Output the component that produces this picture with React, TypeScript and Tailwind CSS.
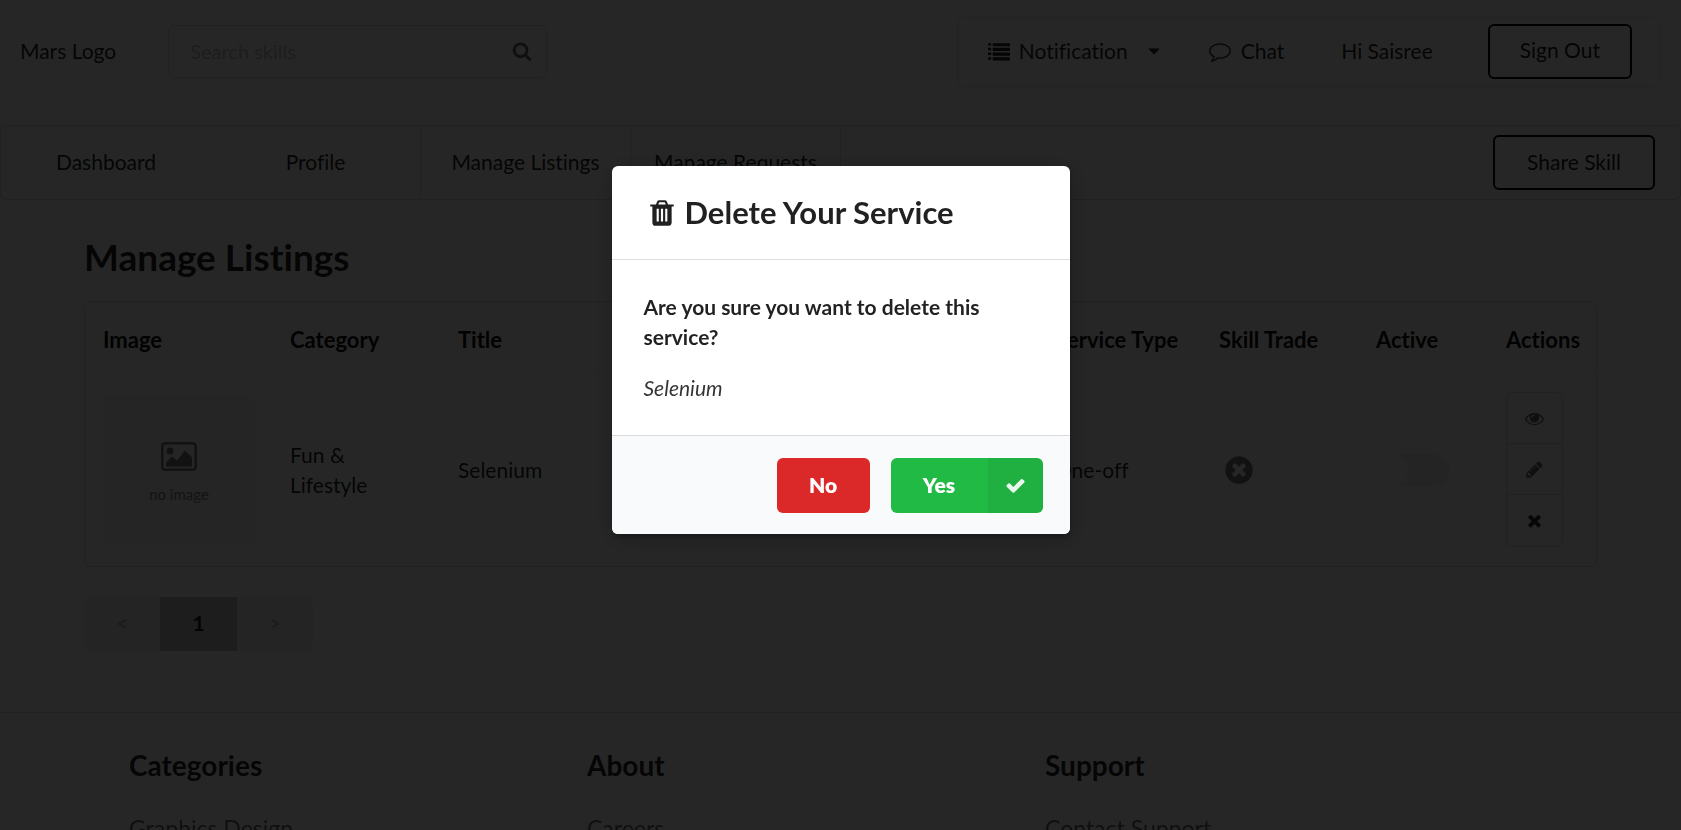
import React from "react";

const ICONS = {
  search:
    "M1216 832q0-185-131.5-316.5t-316.5-131.5-316.5 131.5-131.5 316.5 131.5 316.5 316.5 131.5 316.5-131.5 131.5-316.5zm512 832q0 52-38 90t-90 38q-54 0-90-38l-343-342q-179 124-399 124-143 0-273.5-55.5t-225-150-150-225-55.5-273.5 55.5-273.5 150-225 225-150 273.5-55.5 273.5 55.5 225 150 150 225 55.5 273.5q0 220-124 399l343 343q37 37 37 90z",
  comment:
    "M896 384q-204 0-381.5 69.5t-282 187.5-104.5 255q0 112 71.5 213.5t201.5 175.5l87 50-27 96q-24 91-70 172 152-63 275-171l43-38 57 6q69 8 130 8 204 0 381.5-69.5t282-187.5 104.5-255-104.5-255-282-187.5-381.5-69.5zm896 512q0 174-120 321.5t-326 233-450 85.5q-70 0-145-8-198 175-460 242-49 14-114 22h-5q-15 0-27-10.5t-16-27.5v-1q-3-4-.5-12t2-10 4.5-9.5l6-9 7-8.5 8-9q7-8 31-34.5t34.5-38 31-39.5 32.5-51 27-59 26-76q-157-89-247.5-220t-90.5-281q0-174 120-321.5t326-233 450-85.5 450 85.5 326 233 120 321.5z",
  list: "M0 256h256v192H0zM384 256h1408v256H384zM0 640h256v192H0zM384 640h1408v256H384zM0 1024h256v192H0zM384 1024h1408v256H384zM0 1408h256v192H0zM384 1408h1408v256H384z",
  caret: "M1408 704q0 26-19 45l-448 448q-19 19-45 19t-45-19l-448-448q-19-19-19-45t19-45 45-19h896q26 0 45 19t19 45z",
  times:
    "M1490 1322q0 40-28 68l-136 136q-28 28-68 28t-68-28l-294-294-294 294q-28 28-68 28t-68-28l-136-136q-28-28-28-68t28-68l294-294-294-294q-28-28-28-68t28-68l136-136q28-28 68-28t68 28l294 294 294-294q28-28 68-28t68 28l136 136q28 28 28 68t-28 68l-294 294 294 294q28 28 28 68z",
  timesCircle:
    "M1277 1122q0-26-19-45l-181-181 181-181q19-19 19-45 0-27-19-46l-90-90q-19-19-46-19-26 0-45 19l-181 181-181-181q-19-19-45-19-27 0-46 19l-90 90q-19 19-19 46 0 26 19 45l181 181-181 181q-19 19-19 45 0 27 19 46l90 90q19 19 46 19 26 0 45-19l181-181 181 181q19 19 45 19 27 0 46-19l90-90q19-19 19-46zm387-226q0 209-103 385.5t-279.5 279.5-385.5 103-385.5-103-279.5-279.5-103-385.5 103-385.5 279.5-279.5 385.5-103 385.5 103 279.5 279.5 103 385.5z",
  check:
    "M1671 566q0 40-28 68l-724 724-136 136q-28 28-68 28t-68-28l-136-136-362-362q-28-28-28-68t28-68l136-136q28-28 68-28t68 28l294 295 656-657q28-28 68-28t68 28l136 136q28 28 28 68z",
  pencil:
    "M491 1536l91-91-235-235-91 91v107h128v128h107zm523-928q0-22-22-22-10 0-17 7l-542 542q-7 7-7 17 0 22 22 22 10 0 17-7l542-542q7-7 7-17zm-54-192l416 416-832 832h-416v-416zm683 96q0 53-37 90l-166 166-416-416 166-165q36-38 90-38 53 0 91 38l235 234q37 39 37 91z",
  eye: "M1664 960q-152-236-381-353 61 104 61 225 0 185-131.5 316.5t-316.5 131.5-316.5-131.5-131.5-316.5q0-121 61-225-229 117-381 353 133 205 333.5 326.5t434.5 121.5 434.5-121.5 333.5-326.5zm-720-384q0-20-14-34t-34-14q-125 0-214.5 89.5t-89.5 214.5q0 20 14 34t34 14 34-14 14-34q0-86 61-147t147-61q20 0 34-14t14-34zm848 384q0 34-20 69-140 230-376.5 368.5t-499.5 138.5-499.5-139-376.5-368q-20-35-20-69t20-69q140-229 376.5-368t499.5-139 499.5 139 376.5 368q20 35 20 69z",
  trash:
    "M704 1376v-704q0-14-9-23t-23-9h-64q-14 0-23 9t-9 23v704q0 14 9 23t23 9h64q14 0 23-9t9-23zm256 0v-704q0-14-9-23t-23-9h-64q-14 0-23 9t-9 23v704q0 14 9 23t23 9h64q14 0 23-9t9-23zm256 0v-704q0-14-9-23t-23-9h-64q-14 0-23 9t-9 23v704q0 14 9 23t23 9h64q14 0 23-9t9-23zm-544-992h448l-48-117q-7-9-17-11h-317q-10 2-17 11zm928 32v64q0 14-9 23t-23 9h-96v948q0 83-47 143.5t-113 60.5h-832q-66 0-113-58.5t-47-141.5v-952h-96q-14 0-23-9t-9-23v-64q0-14 9-23t23-9h309l70-167q15-37 54-63t79-26h320q40 0 79 26t54 63l70 167h309q14 0 23 9t9 23z",
};

function Icon({ name, className }: { name: keyof typeof ICONS; className: string }) {
  return (
    <svg viewBox="0 0 1792 1792" fill="currentColor" aria-hidden="true" className={className}>
      <path d={ICONS[name]} />
    </svg>
  );
}

const outlineButton = "h-[55px] rounded-md border-2 border-black pb-[2px] text-black/90";

function Header() {
  return (
    <header className="flex items-center justify-between pt-[17px] pr-5 pl-5">
      <div className="flex items-center gap-[52px] pb-[2px]">
        <a href="#home">Mars Logo</a>
        <div className="relative">
          <input
            type="text"
            aria-label="Search skills"
            placeholder="Search skills"
            className="block h-[53px] w-[379px] rounded-md border border-black/15 pr-14 pb-[2px] pl-[21px] outline-none placeholder:text-[20px] placeholder:text-[#bfbfbf]"
          />
          <button aria-label="Search" className="absolute inset-y-0 right-[15px] text-black/60">
            <Icon name="search" className="size-[20px]" />
          </button>
        </div>
      </div>
      <div className="flex h-[70px] items-center rounded-md border border-black/10 pr-[28px] pb-[2px] pl-[30px]">
        <button className="flex items-center gap-[9px]">
          <Icon name="list" className="size-[22px]" />
          Notification
          <Icon name="caret" className="ml-2 size-[18px]" />
        </button>
        <a href="#chat" className="ml-[46px] flex items-center gap-[10px]">
          <Icon name="comment" className="size-[22px] text-black/75" />
          Chat
        </a>
        <span className="mr-[55px] ml-[57px]">Hi Saisree</span>
        <button className={outlineButton + " px-[30px]"}>Sign Out</button>
      </div>
    </header>
  );
}

function Nav() {
  const items = ["Dashboard", "Profile", "Manage Listings", "Manage Requests"];
  return (
    <nav className="mt-[38px] flex h-[75px] items-center rounded-md border border-black/15 pr-[25px]">
      {items.map((item, i) => (
        <a
          key={item}
          href="#listings"
          className={
            "flex h-full w-[210px] items-center justify-center pb-[2px] " + (i > 0 ? "border-r border-black/15" : "")
          }
        >
          {item}
        </a>
      ))}
      <button className={outlineButton + " ml-auto px-8"}>Share Skill</button>
    </nav>
  );
}

function Listings() {
  const heads: [string, string][] = [
    ["Image", "w-[187px]"],
    ["Category", "w-[168px]"],
    ["Title", "w-[167px]"],
    ["Description", "w-[430px]"],
    ["Service Type", "w-[164px]"],
    ["Skill Trade", "w-[157px]"],
    ["Active", "w-[130px]"],
    ["Actions", ""],
  ];
  const actionButton = "flex h-[51px] items-center justify-center";
  return (
    <main className="px-[84px] pt-[32px]">
      <h1 className="text-[37px] leading-[50px] font-bold">Manage Listings</h1>
      <div className="mt-[19px] rounded-md border border-black/15">
        <table className="w-full table-fixed text-left">
          <thead>
            <tr className="h-[71px] border-b border-black/5 bg-[#fafafa]">
              {heads.map(([label, width]) => (
                <th key={label} className={"pt-[5px] pl-[18px] text-[22px] font-bold whitespace-nowrap text-black/95 " + width}>
                  {label}
                </th>
              ))}
            </tr>
          </thead>
          <tbody>
            <tr className="h-[193px]">
              <td className="pl-[18px]">
                <div className="flex h-[150px] w-[152px] flex-col items-center justify-center rounded-md bg-[#f4f4f4] pt-[6px] text-[#777]">
                  <svg viewBox="0 0 36 29" className="h-[29px] w-[36px]" fill="currentColor" aria-hidden="true">
                    <rect x="1.25" y="1.25" width="33.5" height="26.5" rx="3" fill="none" stroke="currentColor" strokeWidth="2.5" />
                    <circle cx="9" cy="9" r="3.5" />
                    <path d="M5 24.500v-4l6-6 5 4 8-10 7 7v9z" />
                  </svg>
                  <span className="mt-[13px] text-[15px] leading-5 text-[#888]">no image</span>
                </div>
              </td>
              <td className="pr-8 pl-[18px]">Fun &amp; Lifestyle</td>
              <td className="pl-[18px]">Selenium</td>
              <td className="pl-[18px]">Selenium</td>
              <td className="pl-[18px]">One-off</td>
              <td className="pl-[18px]">
                <Icon name="timesCircle" className="ml-1 size-[32px] text-[#777]" />
              </td>
              <td className="pl-[18px]">
                <label className="relative block h-8 w-[74px]">
                  <input type="checkbox" defaultChecked aria-label="Active" className="peer sr-only" />
                  <span className="block h-8 rounded-full bg-[#f1f1f1]" />
                  <span className="absolute top-0 left-0 size-8 rounded-full bg-[#fafafa]" />
                </label>
              </td>
              <td className="pl-[18px]">
                <div className="flex w-[57px] flex-col divide-y divide-black/15 rounded-md border border-black/15 text-black/60">
                  <button aria-label="View" className={actionButton}>
                    <Icon name="eye" className="size-[19px]" />
                  </button>
                  <button aria-label="Edit" className={actionButton}>
                    <Icon name="pencil" className="size-[19px]" />
                  </button>
                  <button aria-label="Delete" className={actionButton + " text-black/80"}>
                    <Icon name="times" className="size-[19px]" />
                  </button>
                </div>
              </td>
            </tr>
          </tbody>
        </table>
      </div>
      <div className="mt-[30px] flex w-[229px] overflow-hidden rounded-md bg-[#f2f2f2]">
        <button className="h-[54px] flex-1 pb-[2px] text-black/30">&lt;</button>
        <button className="h-[54px] flex-1 bg-[#c4c4c4] pb-[2px] font-bold">1</button>
        <button className="h-[54px] flex-1 pb-[2px] text-black/30">&gt;</button>
      </div>
    </main>
  );
}

function Footer() {
  const columns = [
    ["Categories", "Graphics Design"],
    ["About", "Careers"],
    ["Support", "Contact Support"],
  ];
  return (
    <footer className="mt-[61px] grid grid-cols-[458px_458px_1fr] border-t border-black/15 pt-[32px] pl-[129px]">
      {columns.map(([title, link]) => (
        <section key={title}>
          <h2 className="text-[28px] leading-[40px] font-bold">{title}</h2>
          <a href="#footer" className="mt-[28px] block text-[23px] text-black/60">
            {link}
          </a>
        </section>
      ))}
    </footer>
  );
}

function DeleteDialog() {
  return (
    <div className="fixed inset-0 flex items-start justify-center bg-black/85 pt-[166px]">
      <div
        role="dialog"
        aria-modal="true"
        aria-labelledby="dialog-title"
        className="w-[458px] overflow-hidden rounded-md bg-white shadow-[1px_4px_4px_0_rgba(0,0,0,0.2),1px_4px_22px_3px_rgba(0,0,0,0.2)]"
      >
        <div className="flex h-[94px] items-center gap-[8px] border-b border-[#22242626] pl-[35px]">
          <Icon name="trash" className="size-[30px]" />
          <h2 id="dialog-title" className="pb-[2px] text-[31px] leading-10 font-bold">
            Delete Your Service
          </h2>
        </div>
        <div className="px-8 pt-8 pb-8">
          <p className="font-bold">Are you sure you want to delete this service?</p>
          <p className="mt-[21px] text-black/80 italic">Selenium</p>
        </div>
        <div className="flex justify-end gap-[21px] border-t border-[#22242626] bg-[#f9fafb] pt-[22px] pr-[27px] pb-[21px] font-extrabold text-white">
          <button className="h-[55px] w-[93px] rounded-md bg-[#db2828] pb-[2px]">No</button>
          <button className="flex h-[55px] w-[152px] overflow-hidden rounded-md bg-[#21ba45]">
            <span className="flex h-full flex-1 items-center justify-center pb-[2px]">Yes</span>
            <span className="flex h-full w-[55px] items-center justify-center bg-black/5">
              <Icon name="check" className="size-[21px] text-white/90" />
            </span>
          </button>
        </div>
      </div>
    </div>
  );
}

export default function App() {
  return (
    <div className="h-screen overflow-hidden bg-white font-[Lato,sans-serif] text-[21px] leading-[30px] text-black/87 [font-variant-ligatures:none]">
      <Header />
      <Nav />
      <Listings />
      <Footer />
      <DeleteDialog />
    </div>
  );
}
